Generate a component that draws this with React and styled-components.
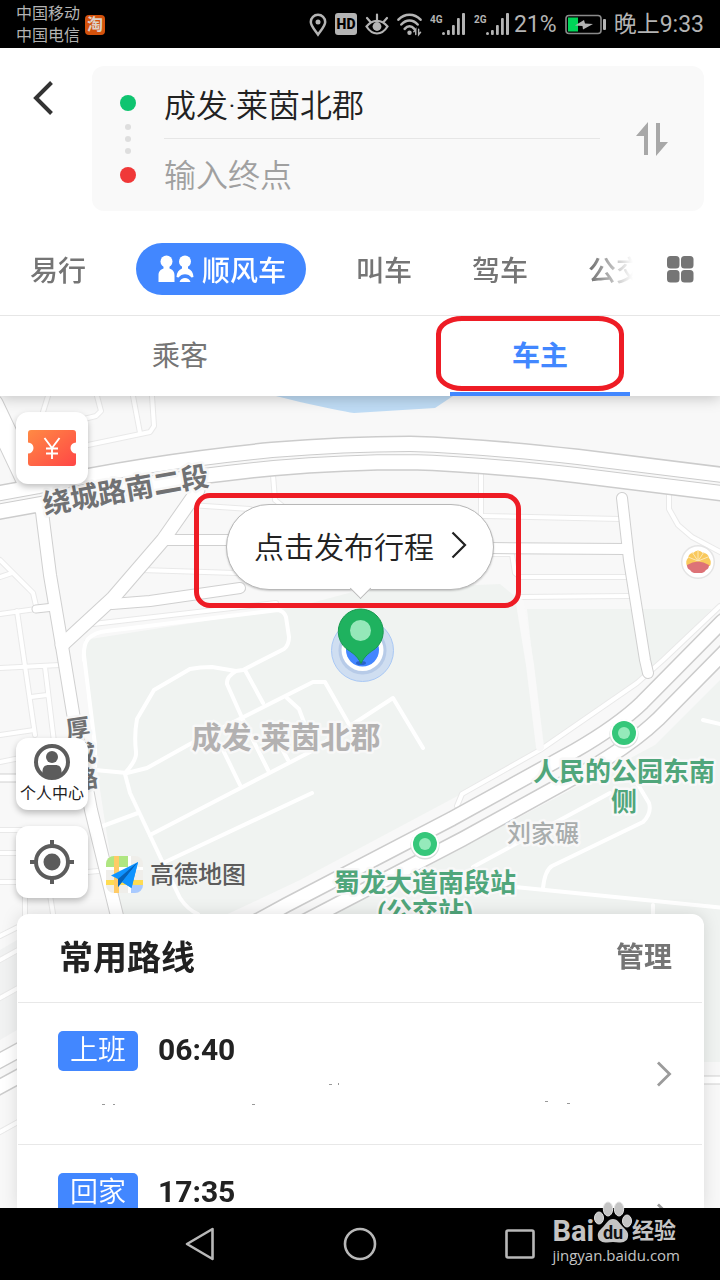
import React, { useState } from "react";
import styled, { createGlobalStyle } from "styled-components";

const GlobalStyle = createGlobalStyle`
  * {
    box-sizing: border-box;
  }
  body {
    margin: 0;
    background: #ffffff;
    font-family: Roboto, "Noto Sans CJK SC", sans-serif;
    color: #222222;
  }
  button, input {
    font-family: inherit;
    color: inherit;
    border: 0;
    padding: 0;
    margin: 0;
    background: transparent;
  }
  button {
    cursor: pointer;
  }
  svg {
    display: block;
    flex: none;
  }
`;

const Screen = styled.div`
  display: flex;
  flex-direction: column;
  height: 100vh;
  overflow: hidden;
  position: relative;
`;

/* status bar */
const StatusBar = styled.div`
  display: flex;
  align-items: center;
  flex: none;
  height: 48px;
  padding: 2px 16px 0;
  background: #000000;
  color: #b4b4b4;
`;
const Carriers = styled.div`
  display: flex;
  flex-direction: column;
  font-size: 16px;
  line-height: 22px;
  margin-right: 5px;
`;
const TaobaoBadge = styled.span`
  width: 20px;
  height: 20px;
  border-radius: 4px;
  background: #d4520c;
  color: #dcd0c8;
  font-size: 16px;
  line-height: 20px;
  text-align: center;
  font-weight: 700;
`;
const StatusIcons = styled.div`
  display: flex;
  align-items: center;
  gap: 8px;
  margin-left: auto;
  font-size: 23px;
  line-height: 32px;
`;
const SignalGroup = styled.div`
  display: flex;
  align-items: center;
  gap: 4px;
`;

/* header */
const Header = styled.header`
  flex: none;
  position: relative;
  z-index: 2;
  background: #ffffff;
  box-shadow: 0 2px 14px rgba(0, 0, 0, 0.22);
`;
const SearchRow = styled.div`
  display: flex;
  align-items: flex-start;
  padding: 18px 16px 0 0;
`;
const BackButton = styled.button`
  display: flex;
  align-items: center;
  width: 92px;
  height: 64px;
  padding-left: 32px;
`;
const SearchCard = styled.div`
  flex: 1;
  display: flex;
  align-items: center;
  padding: 0 36px 0 28px;
  border-radius: 12px;
  background: #f9f9f9;
`;
const RouteDots = styled.div`
  display: flex;
  flex-direction: column;
  align-items: center;
  gap: 13px;
  margin-right: 28px;
`;
const EndDot = styled.span`
  width: 16px;
  height: 16px;
  border-radius: 50%;
  background: ${(props) => props.$color};
`;
const SmallDots = styled.div`
  display: flex;
  flex-direction: column;
  gap: 6px;
`;
const SmallDot = styled.span`
  width: 6px;
  height: 6px;
  border-radius: 50%;
  background: #dedede;
`;
const Fields = styled.div`
  flex: 1;
  display: flex;
  flex-direction: column;
  margin-right: 36px;
`;
const Field = styled.input`
  width: 100%;
  height: 72px;
  padding-top: 2px;
  font-size: 32px;
  font-weight: 350;
  outline: none;
  &:first-child {
    height: 73px;
    border-bottom: 1px solid #e6e6e6;
  }
  &::placeholder {
    color: #a0a0a0;
    opacity: 1;
  }
`;

const ModeRow = styled.nav`
  display: flex;
  align-items: center;
  padding: 32px 26px 20px 0;
  border-bottom: 1px solid #e6e6e6;
`;
const ModeList = styled.div`
  flex: 1;
  display: flex;
  min-width: 0;
  overflow: hidden;
  margin-right: 34px;
  mask-image: linear-gradient(to right, #000 calc(100% - 42px), transparent);
`;
const ModeButton = styled.button`
  flex: none;
  display: flex;
  align-items: center;
  gap: 8px;
  height: 52px;
  font-size: 28px;
  font-weight: 500;
  color: ${(props) => (props.$active ? "#ffffff" : "#757575")};
  background: ${(props) => (props.$active ? "#4287ff" : "transparent")};
  border-radius: 26px;
  padding: ${(props) => (props.$active ? "0 20px 0 22px" : "0 30px")};
  margin: ${(props) => (props.$active ? "0 20px" : "0")};
`;

const RoleTabs = styled.div`
  display: flex;
  height: 80px;
`;
const RoleTab = styled.button`
  flex: 1;
  position: relative;
  display: flex;
  align-items: center;
  justify-content: center;
  padding-bottom: 4px;
  font-size: 28px;
  font-weight: ${(props) => (props.$active ? 700 : 400)};
  color: ${(props) => (props.$active ? "#4287ff" : "#757575")};
  &::after {
    content: "";
    display: ${(props) => (props.$active ? "block" : "none")};
    position: absolute;
    left: 25%;
    right: 25%;
    bottom: 0;
    height: 4px;
    background: #4287ff;
  }
`;
const Highlight = styled.span`
  position: absolute;
  inset: ${(props) => props.$inset};
  border: 5px solid #ee1c25;
  border-radius: ${(props) => props.$radius};
  pointer-events: none;
`;

/* map */
const Stage = styled.main`
  flex: 1;
  min-height: 0;
  position: relative;
  display: flex;
  flex-direction: column;
  overflow: hidden;
  background: #f8f8f8;
`;
const MapCanvas = styled.svg`
  position: absolute;
  inset: 0;
  width: 100%;
  height: 100%;
  font-family: Roboto, "Noto Sans CJK SC", sans-serif;
`;
const MapLabel = styled.text`
  font-size: ${(props) => props.$size}px;
  font-weight: ${(props) => props.$weight || 700};
  fill: ${(props) => props.$color};
  stroke: #f8f8f8;
  stroke-width: 5px;
  stroke-linejoin: round;
  paint-order: stroke;
  text-anchor: middle;
`;
const Tools = styled.div`
  flex: 1;
  position: relative;
  display: flex;
  flex-direction: column;
  align-items: flex-start;
  gap: 16px;
  padding: 16px;
`;
const ToolButton = styled.button`
  display: flex;
  flex-direction: column;
  align-items: center;
  justify-content: center;
  gap: 4px;
  width: 72px;
  height: 72px;
  border-radius: 12px;
  background: #ffffff;
  box-shadow: 0 3px 6px rgba(0, 0, 0, 0.25);
  font-size: 16px;
  line-height: 20px;
  white-space: nowrap;
  color: #222222;
`;
const BottomTools = styled.div`
  display: flex;
  flex-direction: column;
  gap: 16px;
  margin-top: auto;
`;
const LocateRow = styled.div`
  display: flex;
  align-items: flex-end;
  gap: 18px;
`;
const MapBrand = styled.div`
  display: flex;
  align-items: center;
  gap: 7px;
  padding-bottom: 5px;
  font-size: 24px;
  line-height: 32px;
  font-weight: 500;
  color: #5c5c5c;
`;
const Publish = styled.div`
  position: absolute;
  top: 108px;
  left: 50%;
  transform: translateX(-50%);
`;
const PublishButton = styled.button`
  position: relative;
  display: flex;
  align-items: center;
  gap: 17px;
  height: 86px;
  padding: 0 26px 4px 27px;
  border: 1px solid #b8b8b8;
  border-radius: 43px;
  background: #ffffff;
  box-shadow: 0 1px 2px rgba(0, 0, 0, 0.2);
  font-size: 30px;
  font-weight: 350;
  white-space: nowrap;
  &::after {
    content: "";
    position: absolute;
    left: 50%;
    bottom: -7px;
    width: 14px;
    height: 14px;
    margin-left: -7px;
    border: solid #b8b8b8;
    border-width: 0 1px 1px 0;
    background: #ffffff;
    transform: rotate(45deg);
  }
`;

/* routes sheet */
const Sheet = styled.section`
  position: relative;
  flex: none;
  height: 294px;
  margin: 0 16px 0 17px;
  overflow: hidden;
  border-radius: 12px 12px 0 0;
  background: #ffffff;
`;
const SheetShade = styled.div`
  position: relative;
  flex: none;
  filter: drop-shadow(0 0 8px rgba(0, 0, 0, 0.12));
`;
const SheetHead = styled.div`
  display: flex;
  align-items: center;
  justify-content: space-between;
  height: 88px;
  padding: 0 32px 6px 42px;
`;
const SheetTitle = styled.h2`
  margin: 0;
  font-size: 34px;
  font-weight: 700;
`;
const ManageButton = styled.button`
  font-size: 28px;
  font-weight: 700;
  color: #757575;
`;
const RouteRow = styled.a`
  display: flex;
  align-items: center;
  height: 142px;
  margin: 0 2px 0 1px;
  padding: 0 30px 0 40px;
  border-top: 1px solid #e8e8e8;
  color: inherit;
  text-decoration: none;
`;
const RouteBody = styled.div`
  flex: 1;
  display: flex;
  flex-direction: column;
  align-self: stretch;
  padding-top: 28px;
`;
const RouteLine = styled.div`
  display: flex;
  align-items: center;
  gap: 20px;
`;
const RouteTag = styled.span`
  width: 80px;
  height: 40px;
  border-radius: 5px;
  background: #4287ff;
  color: #ffffff;
  font-size: 28px;
  font-weight: 350;
  line-height: 40px;
  text-align: center;
`;
const RouteTime = styled.span`
  font-size: 30px;
  line-height: 38px;
  padding-bottom: 2px;
  font-weight: 700;
`;

/* system navigation */
const SystemNav = styled.nav`
  flex: none;
  display: flex;
  justify-content: center;
  height: 72px;
  background: #000000;
`;
const SystemButton = styled.button`
  display: flex;
  align-items: center;
  justify-content: center;
  width: 160px;
`;
const Watermark = styled.div`
  position: absolute;
  right: 40px;
  bottom: 15px;
  z-index: 3;
  display: flex;
  flex-direction: column;
  align-items: flex-start;
  color: #c4c4c4;
`;
const WatermarkLogo = styled.div`
  display: flex;
  align-items: flex-end;
  font-size: 22px;
  font-weight: 700;
  line-height: 24px;
`;
const WatermarkBai = styled.span`
  font-size: 29px;
`;
const WatermarkUrl = styled.span`
  font-family: "Open Sans", sans-serif;
  font-size: 15px;
  line-height: 20px;
  margin-top: 2px;
`;

const SignalBars = () => (
  <svg width="23" height="24" viewBox="0 0 23 24" fill="#b4b4b4">
    <circle cx="1.500" cy="20.500" r="1.500" />
    <rect x="5" y="17" width="2.800" height="5" rx="1" />
    <rect x="10" y="12" width="2.800" height="10" rx="1" />
    <rect x="15" y="5" width="2.800" height="17" rx="1" />
    <rect x="20" y="0" width="3" height="22" rx="1" />
  </svg>
);

const Signal = ({ label }) => (
  <svg width="36" height="24" viewBox="0 0 36 24" fill="#b4b4b4">
    <text x="0" y="10" fontFamily="Roboto, sans-serif" fontSize="10" fontWeight="700">{label}</text>
    <g transform="translate(12 0)">
      <SignalBars />
    </g>
  </svg>
);

const PinIcon = () => (
  <svg width="18" height="24" viewBox="0 0 18 24" fill="none" stroke="#b4b4b4" strokeWidth="2.500">
    <path d="M9 21.500C6 17 1.800 13 1.800 9a7.200 7.200 0 0 1 14.400 0c0 4-4.200 8-7.200 12.500z" />
    <circle cx="9" cy="9" r="2.500" fill="#b4b4b4" stroke="none" />
  </svg>
);

const HdIcon = () => (
  <svg width="22" height="24" viewBox="0 0 22 24">
    <rect x="0" y="0" width="22" height="22" rx="3" fill="#b4b4b4" />
    <text x="11" y="16" textAnchor="middle" fontFamily="Roboto, sans-serif" fontSize="14" fontWeight="900" fill="#000">HD</text>
  </svg>
);

const EyeIcon = () => (
  <svg width="24" height="24" viewBox="0 0 24 24" fill="none" stroke="#b4b4b4" strokeWidth="2.200" strokeLinecap="round">
    <path d="M1.500 13.500C5 9 8.500 7.800 12 7.800S19 9 22.500 13.500C19 19 15.500 20.500 12 20.500S5 19 1.500 13.500z" />
    <path d="M12 7V1.500M5.500 9L2 5M18.500 9L22 5" />
    <circle cx="12" cy="13.500" r="4.400" fill="#b4b4b4" stroke="none" />
  </svg>
);

const WifiIcon = () => (
  <svg width="25" height="24" viewBox="0 0 26 24" fill="none" stroke="#b4b4b4" strokeWidth="2.600" strokeLinecap="round">
    <path d="M1.500 6.500C8-0.500 18-0.500 24.500 6.500M4.500 11.500c5-5.500 12-5.500 17 0M8 16c3-3.500 7-3.500 10 0" />
    <circle cx="13" cy="20" r="2.300" fill="#b4b4b4" stroke="none" />
    <path d="M19.500 22v-5.500l-2 2.500M22.500 16.500V22l2-2.500" strokeWidth="1.500" />
  </svg>
);

const BatteryIcon = () => (
  <svg width="41" height="22" viewBox="0 0 41 22">
    <rect x="1" y="1.500" width="35" height="18" rx="3" fill="none" stroke="#8a8a8a" strokeWidth="1.600" />
    <rect x="38" y="5" width="3" height="11" rx="1" fill="#b4b4b4" />
    <rect x="3" y="3.500" width="10" height="14" fill="#00d458" />
    <path d="M10 11.500l9-5.500 1 3.500 8 0.500-10 5.500-0.500-3.500z" fill="#b4b4b4" />
  </svg>
);

const CarpoolIcon = () => (
  <svg width="36" height="28" viewBox="0 0 36 28" fill="#ffffff">
    <circle cx="8.500" cy="6.500" r="6" />
    <path d="M5.500 11h6v2.500c3 1 5 3 5 7V27H.5v-6.500c0-4 2-6 5-7z" />
    <circle cx="27" cy="6.500" r="6" />
    <path d="M24 11h6v2.500c3.200 1.200 5.300 4 5.500 8.500l-2 .5c-3-4.500-10-4.500-13 0l-2-.5c.2-4.500 2.300-7.300 5.500-8.500z" />
    <path d="M21.500 27c1.500-5.300 9.500-5.300 11 0z" />
  </svg>
);

const ChevronRight = ({ width, height, color, stroke }) => (
  <svg width={width} height={height} viewBox="0 0 16 28" fill="none" stroke={color} strokeWidth={stroke}>
    <path d="M1.500 1.500L14 14 1.500 26.500" />
  </svg>
);

const CouponIcon = () => (
  <svg width="48" height="36" viewBox="0 0 48 36">
    <defs>
      <linearGradient id="coupon" x1="0" y1="0" x2="1" y2="1">
        <stop offset="0" stopColor="#ff8a44" />
        <stop offset="1" stopColor="#ff4646" />
      </linearGradient>
    </defs>
    <path
      d="M3 0h42a3 3 0 0 1 3 3v9.500a5.500 5.500 0 0 0 0 11V33a3 3 0 0 1-3 3H3a3 3 0 0 1-3-3v-9.500a5.500 5.500 0 0 0 0-11V3a3 3 0 0 1 3-3z"
      fill="url(#coupon)"
    />
    <path d="M16.500 8L24 18l7.500-10M24 18v11M18 18.500h12M18 23.500h12" fill="none" stroke="#fff" strokeWidth="1.900" />
  </svg>
);

const PersonIcon = () => (
  <svg width="36" height="36" viewBox="0 0 36 36" fill="#5c5c5c">
    <circle cx="18" cy="18" r="16" fill="none" stroke="#5c5c5c" strokeWidth="4" />
    <circle cx="18" cy="13" r="6" />
    <path d="M8.500 30v-2.500c0-4.500 2.500-6.500 6-6.500h7c3.500 0 6 2 6 6.500V30c-5 5-14 5-19 0z" />
  </svg>
);

const LocateIcon = () => (
  <svg width="44" height="44" viewBox="0 0 44 44" fill="none" stroke="#5c5c5c" strokeWidth="4">
    <circle cx="22" cy="22" r="16" />
    <path d="M22 0v7M22 37v7M0 22h7M37 22h7" />
    <circle cx="22" cy="22" r="8.500" fill="#5c5c5c" stroke="none" />
  </svg>
);

const AmapLogo = () => (
  <svg width="37" height="37" viewBox="0 0 37 37">
    <defs>
      <clipPath id="amapClip">
        <rect width="37" height="37" rx="8" />
      </clipPath>
    </defs>
    <g clipPath="url(#amapClip)">
      <rect width="37" height="37" fill="#efeeea" />
      <rect width="22" height="11" fill="#afe681" />
      <path d="M0 11h37v3H0zM22 0h3v37h-3z" fill="#ffffff" />
      <path d="M0 24h37v5H0z" fill="#ffdc52" />
      <path d="M8 0h5v37H8z" fill="#ffcb66" />
      <path d="M25 29h12v8H25z" fill="#a8caff" />
    </g>
    <path d="M32 6L5 19.500 12 23v8l4-5 9.500 6z" fill="#0f93ff" />
    <path d="M32 6L12 23v8l4-5z" fill="#0661b8" />
    <path d="M32 6L16 26l9.500 6z" fill="#0f93ff" />
  </svg>
);

const casedRoads = [
  { d: "M-14 392L28 478L42 512L50 575L61 640L75 725L91 810L118 920", w: 12 },
  { d: "M-8 405L30 485", w: 22 },
  { d: "M198 490L163 540L113 598L62 645", w: 13 },
  { d: "M165 540H280M490 548L626 549", w: 10 },
  { d: "M112 604L150 601L240 588", w: 10 },
  { d: "M622 498L629 560L645 660L648 673", w: 10 },
  { d: "M0 778H30M36 609L54 607M700 1080H720", w: 7 },
];

const sideRoads = [
  "M48 396L43 412M97 396L101 411L96 416L84 419",
  "M133 396L140 433M152 396L154 426L150 432L88 445",
  "M273 475L275 500L290 512M190 505L250 509M141 570L236 573",
  "M481 473V515M483 516L620 519M493 554H512L515 573L520 577H627M520 597L629 596",
  "M669 494V509L678 525L692 537L724 554",
  "M0 560L33 593L37 610M0 577L12 573M0 614L36 609M17 611L25 666L35 735",
  "M0 668L60 665M45 667L54 742M31 697L47 695M0 735L34 730M0 762L20 758",
  "M0 830H22M0 853H22M0 882H22M25 895V920M50 895L54 920M88 872L108 870",
  "M93 624L276 603",
  "M720 606L663 660L637 683L540 750L462 794L457 806",
  "M0 936L18 927M0 960L18 950M0 998L18 988M0 1132L18 1122",
];

const parkRoads = [
  "M84 660Q83 645 88 639Q95 632 107 631L278 610Q284 611 286 617L289 637Q289 645 284 649L243 670L236 671L212 667Q200 667 190 669L154 690L137 719Q134 735 136 752Q137 760 125 773",
  "M84 655L86 672L95 745V770L127 773L147 768L190 744L313 682H325L350 726",
  "M125 774L130 793L163 863L180 898Q188 910 198 914",
  "M100 827L138 813M150 835L310 752L393 698L423 748M163 863L312 793",
  "M236 671Q226 677 227 684L243 720L268 770M245 670L263 703M287 698L299 709L305 725M223 750L240 785M280 745L288 760",
  "M473 867L610 793M637 783L649 803Q652 813 643 822L552 866Q545 870 543 888",
  "M515 887L724 908M653 905V915M703 720L724 725",
];

const RING = "M-10 504L40 495Q150 471 273 459Q345 453 410 453Q480 455 577 466L730 485";
const EXPRESSWAY = "M-10 1079L292 915L457 829L580 761Q625 735 650 711L730 630";

const Station = ({ x, y }) => (
  <g>
    <circle cx={x} cy={y + 1} r="14.500" fill="#d8dedb" />
    <circle cx={x} cy={y} r="14" fill="#ffffff" />
    <circle cx={x} cy={y} r="12" fill="#35c77a" />
    <circle cx={x} cy={y} r="6" fill="#95eabb" />
  </g>
);

const CityMap = () => (
  <MapCanvas viewBox="0 396 720 812" preserveAspectRatio="xMidYMin slice">
    <rect x="0" y="396" width="720" height="884" fill="#f8f8f8" />
    <path d="M84 640L300 606L360 590L500 584L522 602L540 752L300 880L215 920H120L97 770z" fill="#f0f3f1" />
    <path d="M527 609H712L630 690L542 745z" fill="#f0f3f1" />
    <path d="M720 680L655 745L420 870L300 930V1062H720z" fill="#f0f3f1" />
    <path d="M0 950L17 940V1030L0 1040z" fill="#f1f2f2" />
    <path d="M276 396L300 402Q340 411 354 413L435 408L453 396z" fill="#bfdcf5" />

    <g fill="none" strokeLinejoin="round" strokeLinecap="round">
      {sideRoads.map((d) => <path key={d} d={d} stroke="#e9e9e9" strokeWidth="6" />)}
      {sideRoads.map((d) => <path key={d} d={d} stroke="#ffffff" strokeWidth="4" />)}
      {parkRoads.map((d) => <path key={d} d={d} stroke="#ffffff" strokeWidth="4" />)}
      <path d="M520 603L530 665L540 747" stroke="#f9f9f9" strokeWidth="8" />

      {casedRoads.map((r) => <path key={r.d} d={r.d} stroke="#d0d0d0" strokeWidth={r.w + 2} />)}
      <path d={RING} stroke="#cccccc" strokeWidth="35" />
      <path d={EXPRESSWAY} stroke="#cccccc" strokeWidth="39" />
      {casedRoads.map((r) => <path key={r.d} d={r.d} stroke="#ffffff" strokeWidth={r.w} />)}
      <path d={RING} stroke="#ffffff" strokeWidth="32" />
      <path d={RING} stroke="#cccccc" strokeWidth="4" />
      <path d={RING} stroke="#f8f8f8" strokeWidth="2" />
      <path d={EXPRESSWAY} stroke="#ffffff" strokeWidth="36" />
      <path d={EXPRESSWAY} stroke="#cccccc" strokeWidth="10" />
      <path d={EXPRESSWAY} stroke="#f8f8f8" strokeWidth="7" />
    </g>

    <MapLabel x="126" y="500" $size={28} $color="#707173" transform="rotate(-10 126 492)">绕城路南二段</MapLabel>
    <MapLabel x="78" y="737" $size={24} $color="#707173" transform="rotate(-8 78 728)">厚</MapLabel>
    <MapLabel x="84" y="763" $size={24} $color="#707173" transform="rotate(-8 84 754)">成</MapLabel>
    <MapLabel x="86" y="788" $size={24} $color="#707173" transform="rotate(-8 86 779)">路</MapLabel>
    <MapLabel x="286" y="748" $size={30} $weight={700} $color="#b3b1b1">成发·莱茵北郡</MapLabel>
    <MapLabel x="543" y="842" $size={24} $weight={500} $color="#a9adad">刘家碾</MapLabel>
    <MapLabel x="624" y="781" $size={26} $color="#50a67b">人民的公园东南</MapLabel>
    <MapLabel x="624" y="811" $size={26} $color="#50a67b">侧</MapLabel>
    <MapLabel x="425" y="892" $size={26} $color="#50a67b">蜀龙大道南段站</MapLabel>
    <MapLabel x="425" y="921" $size={26} $color="#50a67b">(公交站)</MapLabel>
    <Station x={624} y={733} />
    <Station x={425} y={844} />

    <circle cx="698" cy="562" r="17" fill="#e4e4e4" />
    <circle cx="698" cy="562" r="15.500" fill="#ffffff" />
    <path d="M687 566q-2-5 1-8 1-5 5-5 5-5 10 0 5 0 6 5 3 3 1 8z" fill="#f9c95c" />
    <path d="M698 561v-11M698 561l-6-9M698 561l6-9M698 561l-10-4M698 561l10-4" stroke="#fde7b5" strokeWidth="1" />
    <path d="M687 565q11-7 22 0 0 4-3 5-2 3-4 3h-8q-2 0-4-3-3-1-3-5z" fill="#dd7277" />

    <circle cx="362.500" cy="650.500" r="31" fill="#b9d0f2" fillOpacity="0.600" stroke="#a9c8f5" />
    <circle cx="362.500" cy="650.500" r="24" fill="#9fb7df" fillOpacity="0.500" />
    <circle cx="362.500" cy="650" r="21" fill="#ffffff" />
    <circle cx="362.500" cy="650" r="16.500" fill="#4285ff" />
    <ellipse cx="361" cy="663" rx="5" ry="2" fill="#2a62c8" />
    <path d="M361 663.500C357 655 351.500 652.500 346 648.500A22.500 22.500 0 1 1 375.500 648.500C370 652.500 365 655 361 663.500z" fill="#1fb25f" stroke="#18994f" />
    <circle cx="360.500" cy="630.500" r="10.500" fill="#95e8b9" />
  </MapCanvas>
);

const modes = ["易行", "顺风车", "叫车", "驾车", "公交"];
const roles = ["乘客", "车主"];
const routes = [
  { tag: "上班", time: "06:40" },
  { tag: "回家", time: "17:35" },
];

function App() {
  const [mode, setMode] = useState("顺风车");
  const [role, setRole] = useState("车主");
  const [start, setStart] = useState("成发·莱茵北郡");
  const [end, setEnd] = useState("");

  return (
    <Screen>
      <GlobalStyle />
      <StatusBar>
        <Carriers>
          <span>中国移动</span>
          <span>中国电信</span>
        </Carriers>
        <TaobaoBadge>淘</TaobaoBadge>
        <StatusIcons>
          <PinIcon />
          <HdIcon />
          <EyeIcon />
          <WifiIcon />
          <Signal label="4G" />
          <SignalGroup>
            <Signal label="2G" />
            <span>21%</span>
          </SignalGroup>
          <BatteryIcon />
          <span>晚上9:33</span>
        </StatusIcons>
      </StatusBar>

      <Header>
        <SearchRow>
          <BackButton type="button" aria-label="返回">
            <svg width="22" height="34" viewBox="0 0 22 34" fill="none" stroke="#333333" strokeWidth="4">
              <path d="M19.500 1.500L4 17l15.500 15.500" />
            </svg>
          </BackButton>
          <SearchCard>
            <RouteDots>
              <EndDot $color="#0fc470" />
              <SmallDots>
                <SmallDot />
                <SmallDot />
                <SmallDot />
              </SmallDots>
              <EndDot $color="#f03838" />
            </RouteDots>
            <Fields>
              <Field aria-label="起点" value={start} onChange={(e) => setStart(e.target.value)} />
              <Field aria-label="终点" placeholder="输入终点" value={end} onChange={(e) => setEnd(e.target.value)} />
            </Fields>
            <button type="button" aria-label="交换起点和终点">
              <svg width="32" height="34" viewBox="0 0 32 34" fill="#a8a8a8">
                <path d="M12 0L0 14h8v19h4zM20 1h4v19h8L20 34z" />
              </svg>
            </button>
          </SearchCard>
        </SearchRow>

        <ModeRow>
          <ModeList>
            {modes.map((m) => (
              <ModeButton key={m} type="button" $active={m === mode} onClick={() => setMode(m)}>
                {m === "顺风车" && <CarpoolIcon />}
                {m}
              </ModeButton>
            ))}
          </ModeList>
          <button type="button" aria-label="全部">
            <svg width="27" height="27" viewBox="0 0 27 27" fill="#757575">
              <rect x="0" y="0" width="12.500" height="12.500" rx="3.500" />
              <rect x="14" y="0" width="12.500" height="12.500" rx="3.500" />
              <rect x="0" y="14" width="12.500" height="12.500" rx="3.500" />
              <rect x="14" y="14" width="12.500" height="12.500" rx="3.500" />
            </svg>
          </button>
        </ModeRow>

        <RoleTabs>
          {roles.map((r) => (
            <RoleTab key={r} type="button" $active={r === role} onClick={() => setRole(r)}>
              {r}
              {r === "车主" && <Highlight $inset="0 96px 5px 76px" $radius="26px / 18px" />}
            </RoleTab>
          ))}
        </RoleTabs>
      </Header>

      <Stage>
        <CityMap />
        <Tools>
          <ToolButton type="button" aria-label="优惠券">
            <CouponIcon />
          </ToolButton>
          <BottomTools>
            <ToolButton type="button">
              <PersonIcon />
              个人中心
            </ToolButton>
            <LocateRow>
              <ToolButton type="button" aria-label="定位">
                <LocateIcon />
              </ToolButton>
              <MapBrand>
                <AmapLogo />
                高德地图
              </MapBrand>
            </LocateRow>
          </BottomTools>
          <Publish>
            <PublishButton type="button">
              点击发布行程
              <ChevronRight width="16" height="28" color="#222222" stroke="2.200" />
            </PublishButton>
            <Highlight $inset="-11px -27px -18px -32px" $radius="16px" />
          </Publish>
        </Tools>

        <SheetShade>
          <Sheet>
            <SheetHead>
              <SheetTitle>常用路线</SheetTitle>
              <ManageButton type="button">管理</ManageButton>
            </SheetHead>
            {routes.map((r) => (
              <RouteRow key={r.tag} href="#">
                <RouteBody>
                  <RouteLine>
                    <RouteTag>{r.tag}</RouteTag>
                    <RouteTime>{r.time}</RouteTime>
                  </RouteLine>
                  {r.tag === "上班" && (
                    <svg width="520" height="40" viewBox="58 1071 520 40" fill="#999999">
                      <path d="M102 1104h3v1h-3zM113 1104h2v1h-2zM252 1104h3v1h-3zM329 1084h3v1h-3zM338 1083h1v2h-1zM545 1101h3v1h-3zM567 1103h3v1h-3z" />
                    </svg>
                  )}
                </RouteBody>
                <ChevronRight width="16" height="26" color="#9b9b9b" stroke="3" />
              </RouteRow>
            ))}
          </Sheet>
        </SheetShade>
      </Stage>

      <SystemNav>
        <SystemButton type="button" aria-label="返回">
          <svg width="30" height="34" viewBox="0 0 30 34" fill="none" stroke="#b8b8b8" strokeWidth="2.600" strokeLinejoin="round">
            <path d="M27.500 2v30L2 17z" />
          </svg>
        </SystemButton>
        <SystemButton type="button" aria-label="主页">
          <svg width="34" height="34" viewBox="0 0 34 34" fill="none" stroke="#b8b8b8" strokeWidth="2.600">
            <circle cx="17" cy="17" r="15" />
          </svg>
        </SystemButton>
        <SystemButton type="button" aria-label="最近任务">
          <svg width="30" height="30" viewBox="0 0 30 30" fill="none" stroke="#b8b8b8" strokeWidth="2.600">
            <rect x="1.500" y="1.500" width="27" height="27" rx="1.500" />
          </svg>
        </SystemButton>
      </SystemNav>

      <Watermark>
        <WatermarkLogo>
          <WatermarkBai>Bai</WatermarkBai>
          <svg width="38" height="42" viewBox="0 0 38 42" fill="#c4c4c4">
            <g stroke="#e2e2e2" strokeWidth="1">
              <ellipse cx="5" cy="17" rx="4.500" ry="6" />
              <ellipse cx="14" cy="8" rx="4.700" ry="7" />
              <ellipse cx="25" cy="8" rx="4.700" ry="7" />
              <ellipse cx="33" cy="20" rx="4.500" ry="6" />
            </g>
            <path d="M19 18c5 0 7 5 10 8s6 5 5 10c-1 6-8 6-15 5-7 1-14 1-15-5-1-5 2-7 5-10s5-8 10-8z" />
            <text x="19" y="38" textAnchor="middle" fontFamily="Roboto, sans-serif" fontSize="18" fontWeight="700" fill="#111111">du</text>
          </svg>
          经验
        </WatermarkLogo>
        <WatermarkUrl>jingyan.baidu.com</WatermarkUrl>
      </Watermark>
    </Screen>
  );
}

export default App;
